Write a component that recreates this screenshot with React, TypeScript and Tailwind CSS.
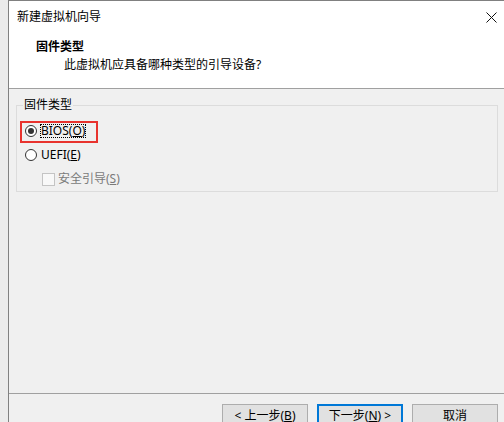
import React from "react";

const font = { fontFamily: '"Noto Sans", "Noto Sans CJK SC", sans-serif' };

function Radio({ checked }: { checked?: boolean }) {
  return (
    <span className="w-[12px] h-[12px] rounded-full border border-[#333333] bg-white flex items-center justify-center shrink-0">
      {checked && <span className="w-[6px] h-[6px] rounded-full bg-[#333333]" />}
    </span>
  );
}

function Btn({ children, primary }: { children: React.ReactNode; primary?: boolean }) {
  return (
    <div
      className={
        "w-[86px] h-[23px] flex items-center justify-center text-[12px] text-black bg-[#e1e1e1] " +
        (primary ? "border-2 border-[#0078d7]" : "border border-[#adadad]")
      }
    >
      {children}
    </div>
  );
}

export default function App() {
  return (
    <div className="w-[504px] h-[422px] overflow-hidden flex bg-[#f0f0f0] text-black text-[12px] leading-[16px]" style={font}>
      <div className="w-[8px] bg-[#ebebeb] shrink-0" />
      <div className="flex-1 flex flex-col border-l border-t border-[#808080] min-w-0">
        {/* header */}
        <div className="h-[88px] bg-white border-b border-[#a0a0a0] flex flex-col shrink-0">
          <div className="flex items-center justify-between pl-[8px] pr-[7px] pt-[8px]">
            <span className="h-[16px]">新建虚拟机向导</span>
            <svg width="11" height="11" viewBox="0 0 11 11" className="block">
              <path d="M0.5 0.5 L10.5 10.5 M10.5 0.5 L0.5 10.5" stroke="#111" strokeWidth="1" />
            </svg>
          </div>
          <div className="pl-[27px] mt-[14px] font-bold h-[16px]">固件类型</div>
          <div className="pl-[55px] mt-[2px] h-[16px]">此虚拟机应具备哪种类型的引导设备?</div>
        </div>

        {/* body */}
        <div className="flex-1 flex flex-col pt-[8px] pl-[7px] pr-[6px]">
          <fieldset className="border border-[#dcdcdc] p-0 m-0 w-[482px] flex flex-col">
            <legend className="ml-[6px] px-[1px] h-[16px] leading-[16px]">固件类型</legend>
            <div className="h-[5px]" />
            <div className="relative h-[25px] flex items-center pl-[8px] gap-[3px]">
              <Radio checked />
              <span className="border border-dotted border-black leading-[12px] h-[14px] flex items-center">
                <span>
                  BIOS(<span className="underline">O</span>)
                </span>
              </span>
              <div className="absolute left-[3px] top-[3px] w-[78px] h-[22px] border-2 border-[#e8332e]" />
            </div>
            <div className="h-[24px] flex items-center pl-[8px] gap-[3px]">
              <Radio />
              <span className="border border-transparent leading-[12px] h-[14px] flex items-center">
                <span>
                  UEFI(<span className="underline">E</span>)
                </span>
              </span>
            </div>
            <div className="h-[24px] flex items-center pl-[25px] gap-[3px]">
              <span className="w-[13px] h-[13px] border border-[#c4c4c4] bg-[#f8f8f8] shrink-0" />
              <span className="text-[#7a7a7a]">
                安全引导(<span className="underline">S</span>)
              </span>
            </div>
          </fieldset>
        </div>

        {/* footer */}
        <div className="h-[29px] shrink-0 border-t border-[#a0a0a0] flex items-start justify-end gap-[9px] pt-[10px] pr-[6px]">
          <Btn>
            &lt; 上一步(<span className="underline">B</span>)
          </Btn>
          <Btn primary>
            下一步(<span className="underline">N</span>) &gt;
          </Btn>
          <Btn>取消</Btn>
        </div>
      </div>
    </div>
  );
}
